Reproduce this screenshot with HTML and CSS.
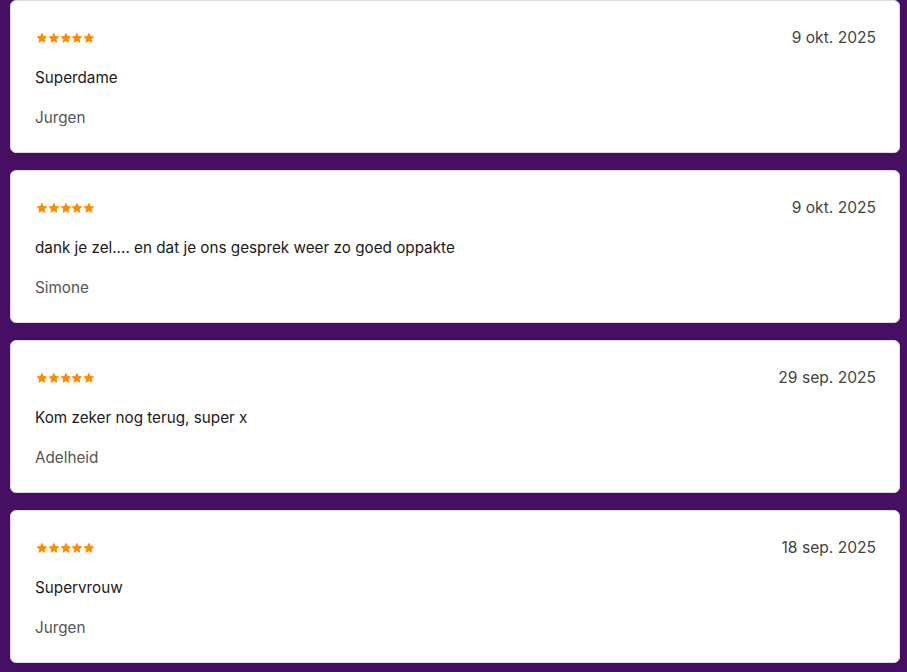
FILE: index.html
```html
<!DOCTYPE html>
<html lang="nl">
<head>
<meta charset="utf-8">
<title>Reviews</title>
<link rel="stylesheet" href="styles.css">
</head>
<body>
<svg width="0" height="0" class="defs">
  <defs>
    <symbol id="star" viewBox="0 0 24 24">
      <path d="M12 1l3.4 7.1 7.8 1-5.7 5.4 1.4 7.7L12 18.5l-6.9 3.7 1.4-7.7L.8 9.1l7.8-1z"/>
    </symbol>
  </defs>
</svg>
<main class="list">
  <article class="card">
    <div class="top">
      <div class="stars"><svg><use href="#star"/></svg><svg><use href="#star"/></svg><svg><use href="#star"/></svg><svg><use href="#star"/></svg><svg><use href="#star"/></svg></div>
      <span class="date">9 okt. 2025</span>
    </div>
    <p class="text">Superdame</p>
    <p class="name">Jurgen</p>
  </article>
  <article class="card">
    <div class="top">
      <div class="stars"><svg><use href="#star"/></svg><svg><use href="#star"/></svg><svg><use href="#star"/></svg><svg><use href="#star"/></svg><svg><use href="#star"/></svg></div>
      <span class="date">9 okt. 2025</span>
    </div>
    <p class="text">dank je zel.... en dat je ons gesprek weer zo goed oppakte</p>
    <p class="name">Simone</p>
  </article>
  <article class="card">
    <div class="top">
      <div class="stars"><svg><use href="#star"/></svg><svg><use href="#star"/></svg><svg><use href="#star"/></svg><svg><use href="#star"/></svg><svg><use href="#star"/></svg></div>
      <span class="date">29 sep. 2025</span>
    </div>
    <p class="text">Kom zeker nog terug, super x</p>
    <p class="name">Adelheid</p>
  </article>
  <article class="card">
    <div class="top">
      <div class="stars"><svg><use href="#star"/></svg><svg><use href="#star"/></svg><svg><use href="#star"/></svg><svg><use href="#star"/></svg><svg><use href="#star"/></svg></div>
      <span class="date">18 sep. 2025</span>
    </div>
    <p class="text">Supervrouw</p>
    <p class="name">Jurgen</p>
  </article>
</main>
</body>
</html>
```
FILE: styles.css
```css
html, body {
  margin: 0;
  padding: 0;
  background: #470f63;
  font-family: Inter, "Noto Sans", "Liberation Sans", sans-serif;
}
.defs {
  position: absolute;
  width: 0;
  height: 0;
}
.list {
  display: flex;
  flex-direction: column;
  gap: 17px;
  padding: 0 7px 9px 10px;
}
.card {
  background: #fff;
  border: 1px solid #dcdcdc;
  border-radius: 6px;
  padding: 25px 23px 22px 24px;
  display: flex;
  flex-direction: column;
  gap: 16px;
  box-shadow: 0 1px 2px rgba(0,0,0,0.08);
}
.top {
  display: flex;
  justify-content: space-between;
  align-items: center;
  height: 24px;
}
.stars {
  display: flex;
  gap: 0;
  padding-left: 1px;
}
.stars svg {
  width: 11.8px;
  height: 11.8px;
  fill: #ff8c00;
}
.date {
  font-size: 15.6px;
  color: #444;
  line-height: 24px;
}
.text, .name {
  margin: 0;
  font-size: 15.25px;
  line-height: 24px;
}
.text {
  color: #1a1a1a;
}
.name {
  color: #555;
}
```
